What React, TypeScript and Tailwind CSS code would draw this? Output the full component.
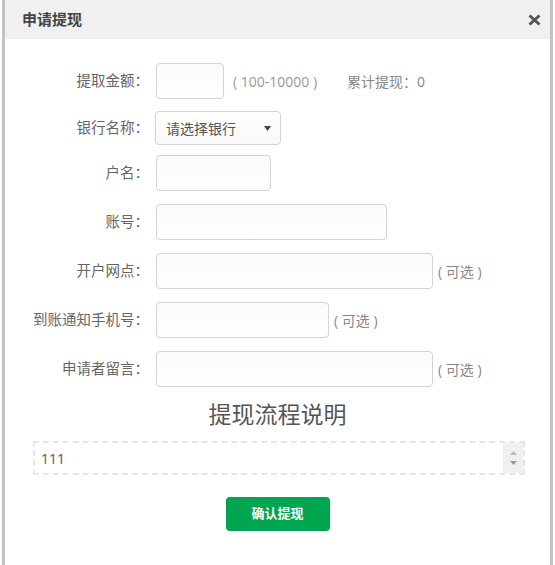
import React from "react";

const font = { fontFamily: '"Open Sans", "Noto Sans CJK SC", sans-serif' };

function Label({ children }: { children: React.ReactNode }) {
  return (
    <div className="w-[146px] shrink-0 pr-[2px] text-right text-[14.5px] text-[#666]">{children}</div>
  );
}

function Field({ w }: { w: string }) {
  return (
    <div
      className={`${w} h-[36px] shrink-0 rounded-[4px] border border-[#d4d4d4] bg-gradient-to-b from-[#fafafa] to-white`}
    />
  );
}

function Hint({ children }: { children: React.ReactNode }) {
  return <span className="ml-[5px] text-[14px] text-[#888]">{children}</span>;
}

export default function App() {
  return (
    <div className="min-h-[565px] bg-white" style={font}>
      <div className="ml-[2px] w-[551px] h-[565px] border-x-[3px] border-[#c3c3c3] bg-white overflow-hidden">
        <div className="h-[39px] bg-[#f0f0f0] flex items-center justify-between pl-[17px] pr-[9px]">
          <span className="text-[15px] font-bold text-[#444]">申请提现</span>
          <svg width="13" height="12" viewBox="0 0 13 12">
            <path d="M1.5 1.5 L11.5 10.5 M11.5 1.5 L1.5 10.5" stroke="#555" strokeWidth="3" />
          </svg>
        </div>

        <div className="flex flex-col pt-[24px]">
          <div className="flex items-center h-[36px]">
            <Label>提取金额：</Label>
            <div className="ml-[5px] flex items-center">
              <Field w="w-[68px]" />
              <span className="ml-[9px] text-[14px] text-[#999]">( 100-10000 )</span>
              <span className="ml-[30px] text-[14px] text-[#888]">累计提现：0</span>
            </div>
          </div>

          <div className="mt-[12px] flex items-center h-[34px]">
            <Label>银行名称：</Label>
            <div className="ml-[4px] w-[126px] h-[34px] rounded-[4px] border border-[#d4d4d4] bg-gradient-to-b from-white to-[#f8f8f8] flex items-center justify-between pl-[10px] pr-[9px]">
              <span className="text-[14px] text-[#555]">请选择银行</span>
              <svg width="7" height="5" viewBox="0 0 7 5">
                <path d="M0 0 L7 0 L3.5 5 Z" fill="#444" />
              </svg>
            </div>
          </div>

          <div className="mt-[10px] flex flex-col gap-[13px]">
            <div className="flex items-center h-[36px]">
              <Label>户名：</Label>
              <div className="ml-[5px]">
                <Field w="w-[115px]" />
              </div>
            </div>

            <div className="flex items-center h-[36px]">
              <Label>账号：</Label>
              <div className="ml-[5px]">
                <Field w="w-[231px]" />
              </div>
            </div>

            <div className="flex items-center h-[36px]">
              <Label>开户网点：</Label>
              <div className="ml-[5px] flex items-center">
                <Field w="w-[277px]" />
                <Hint>( 可选 )</Hint>
              </div>
            </div>

            <div className="flex items-center h-[36px]">
              <Label>到账通知手机号：</Label>
              <div className="ml-[5px] flex items-center">
                <Field w="w-[173px]" />
                <Hint>( 可选 )</Hint>
              </div>
            </div>

            <div className="flex items-center h-[36px]">
              <Label>申请者留言：</Label>
              <div className="ml-[5px] flex items-center">
                <Field w="w-[277px]" />
                <Hint>( 可选 )</Hint>
              </div>
            </div>
          </div>
        </div>

        <div className="mt-[12px] text-center text-[23px] text-[#555] leading-[30px]">提现流程说明</div>

        <div className="mt-[12px] ml-[28px] w-[492px] h-[34px] border-2 border-dashed border-[#e6e6e6] flex items-center justify-between">
          <span className="pl-[6px] text-[14px] text-[#555]">111</span>
          <div className="w-[20px] h-full bg-[#f0f0f0] flex flex-col items-center justify-center gap-[6px]">
            <svg width="7" height="4" viewBox="0 0 7 4"><path d="M0 4 L7 4 L3.5 0 Z" fill="#bbb" /></svg>
            <svg width="7" height="4" viewBox="0 0 7 4"><path d="M0 0 L7 0 L3.5 4 Z" fill="#999" /></svg>
          </div>
        </div>

        <div className="mt-[22px] flex justify-center">
          <button className="w-[104px] h-[34px] rounded-[4px] bg-[#00a54f] text-white text-[13px] font-bold">
            确认提现
          </button>
        </div>
      </div>
    </div>
  );
}
